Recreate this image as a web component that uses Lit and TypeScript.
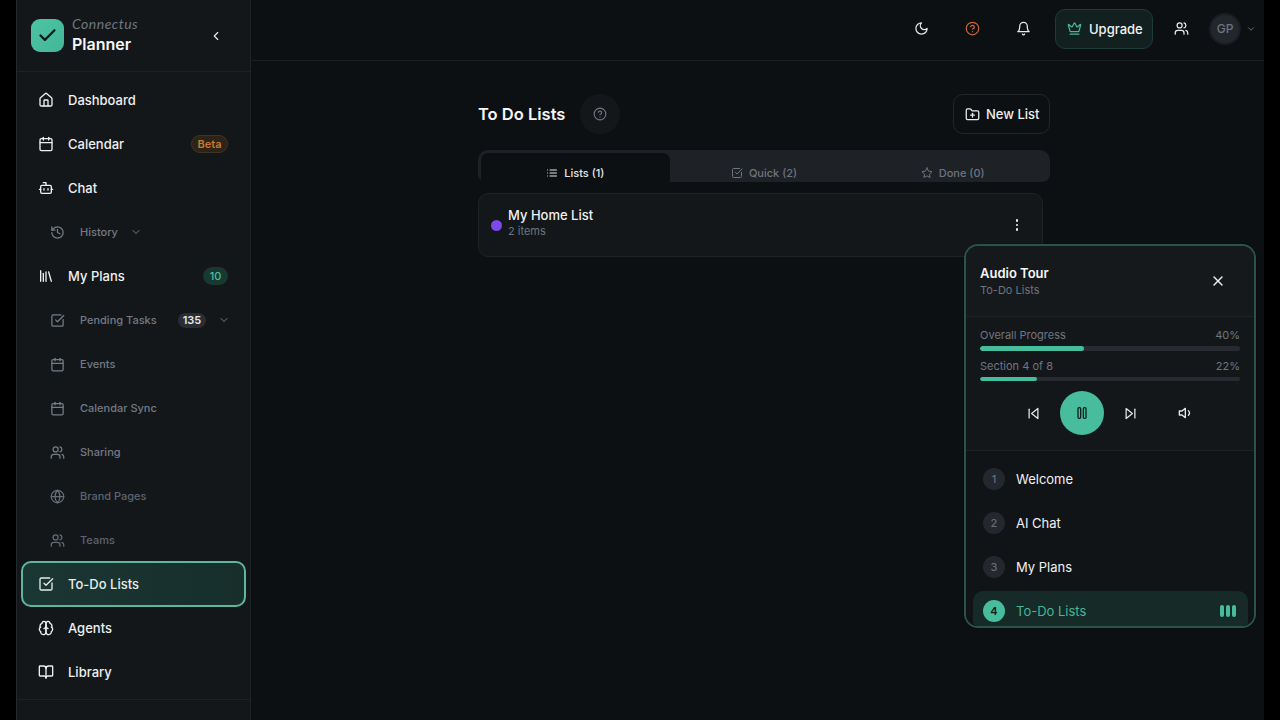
import { LitElement, html, css, svg } from "lit";
import { customElement } from "lit/decorators.js";

const I: Record<string, any> = {
  house: svg`<path d="M15 21v-8a1 1 0 0 0-1-1h-4a1 1 0 0 0-1 1v8"/><path d="M3 10a2 2 0 0 1 .709-1.528l7-5.999a2 2 0 0 1 2.582 0l7 5.999A2 2 0 0 1 21 10v9a2 2 0 0 1-2 2H5a2 2 0 0 1-2-2z"/>`,
  calendar: svg`<path d="M8 2v4"/><path d="M16 2v4"/><rect width="18" height="18" x="3" y="4" rx="2"/><path d="M3 10h18"/>`,
  bot: svg`<path d="M12 8V4H8"/><rect width="16" height="12" x="4" y="8" rx="2"/><path d="M2 14h2"/><path d="M20 14h2"/><path d="M15 13v2"/><path d="M9 13v2"/>`,
  history: svg`<path d="M3 12a9 9 0 1 0 9-9 9.75 9.75 0 0 0-6.74 2.74L3 8"/><path d="M3 3v5h5"/><path d="M12 7v5l4 2"/>`,
  library: svg`<path d="m16 6 4 14"/><path d="M12 6v14"/><path d="M8 8v12"/><path d="M4 4v16"/>`,
  check: svg`<path d="M21 10.5V19a2 2 0 0 1-2 2H5a2 2 0 0 1-2-2V5a2 2 0 0 1 2-2h12.5"/><path d="m9 11 3 3L22 4"/>`,
  users: svg`<path d="M16 21v-2a4 4 0 0 0-4-4H6a4 4 0 0 0-4 4v2"/><circle cx="9" cy="7" r="4"/><path d="M22 21v-2a4 4 0 0 0-3-3.87"/><path d="M16 3.13a4 4 0 0 1 0 7.75"/>`,
  globe: svg`<circle cx="12" cy="12" r="10"/><path d="M12 2a14.5 14.5 0 0 0 0 20 14.5 14.5 0 0 0 0-20"/><path d="M2 12h20"/>`,
  brain: svg`<path d="M12 5a3 3 0 1 0-5.997.125 4 4 0 0 0-2.526 5.77 4 4 0 0 0 .556 6.588A4 4 0 1 0 12 18Z"/><path d="M12 5a3 3 0 1 1 5.997.125 4 4 0 0 1 2.526 5.77 4 4 0 0 1-.556 6.588A4 4 0 1 1 12 18Z"/><path d="M15 13a4.5 4.5 0 0 1-3-4 4.5 4.5 0 0 1-3 4"/><path d="M3.477 10.896a4 4 0 0 1 .585-.396"/><path d="M19.938 10.5a4 4 0 0 1 .585.396"/>`,
  book: svg`<path d="M12 7v14"/><path d="M3 18a1 1 0 0 1-1-1V4a1 1 0 0 1 1-1h5a4 4 0 0 1 4 4 4 4 0 0 1 4-4h5a1 1 0 0 1 1 1v13a1 1 0 0 1-1 1h-6a3 3 0 0 0-3 3 3 3 0 0 0-3-3z"/>`,
  moon: svg`<path d="M12 3a6 6 0 0 0 9 9 9 9 0 1 1-9-9Z"/>`,
  help: svg`<circle cx="12" cy="12" r="10"/><path d="M9.09 9a3 3 0 0 1 5.83 1c0 2-3 3-3 3"/><path d="M12 17h.01"/>`,
  bell: svg`<path d="M6 8a6 6 0 0 1 12 0c0 7 3 9 3 9H3s3-2 3-9"/><path d="M10.3 21a1.94 1.94 0 0 0 3.4 0"/>`,
  crown: svg`<path d="M11.562 3.266a.5.5 0 0 1 .876 0L15.39 8.87a1 1 0 0 0 1.516.294L21.183 5.5a.5.5 0 0 1 .798.519l-2.834 10.246a1 1 0 0 1-.956.734H5.81a1 1 0 0 1-.957-.734L2.02 6.02a.5.5 0 0 1 .798-.519l4.276 3.664a1 1 0 0 0 1.516-.294z"/><path d="M5 21h14"/>`,
  folder: svg`<path d="M12 10v6"/><path d="M9 13h6"/><path d="M20 20a2 2 0 0 0 2-2V8a2 2 0 0 0-2-2h-7.9a2 2 0 0 1-1.69-.9L9.6 3.9A2 2 0 0 0 7.93 3H4a2 2 0 0 0-2 2v13a2 2 0 0 0 2 2Z"/>`,
  list: svg`<path d="M3 12h.01"/><path d="M3 18h.01"/><path d="M3 6h.01"/><path d="M8 12h13"/><path d="M8 18h13"/><path d="M8 6h13"/>`,
  star: svg`<polygon points="12 2 15.09 8.26 22 9.27 17 14.14 18.18 21.02 12 17.77 5.82 21.02 7 14.14 2 9.27 8.91 8.26 12 2"/>`,
  back: svg`<polygon points="19 20 9 12 19 4 19 20"/><line x1="5" x2="5" y1="19" y2="5"/>`,
  fwd: svg`<polygon points="5 4 15 12 5 20 5 4"/><line x1="19" x2="19" y1="5" y2="19"/>`,
  pause: svg`<rect x="14" y="4" width="4" height="16" rx="1.5"/><rect x="6" y="4" width="4" height="16" rx="1.5"/>`,
  vol: svg`<polygon points="11 5 6 9 2 9 2 15 6 15 11 19 11 5"/><path d="M15.54 8.46a5 5 0 0 1 0 7.07"/>`,
  x: svg`<path d="M18 6 6 18"/><path d="m6 6 12 12"/>`,
  left: svg`<path d="m15 18-6-6 6-6"/>`,
  down: svg`<path d="m6 9 6 6 6-6"/>`,
  up: svg`<path d="m18 15-6-6-6 6"/>`,
  tick: svg`<path d="M20 6 9 17l-5-5"/>`,
};

function icon(name: string, cls = "") {
  return html`<svg class="ic ${cls}" viewBox="0 0 24 24" fill="none" stroke="currentColor" stroke-width="2" stroke-linecap="round" stroke-linejoin="round">${I[name]}</svg>`;
}

@customElement("app-root")
export class AppRoot extends LitElement {
  static styles = css`
    :host { display: block; height: 720px; background: #000; font-family: Inter, "Noto Sans", sans-serif; color: #f2f3f4; overflow: hidden; }
    * { box-sizing: border-box; }
    .ic { display: block; flex: none; width: 16px; height: 16px; }
    .s12 { width: 12px; height: 12px; }
    .s14 { width: 14px; height: 14px; }
    .s15 { width: 15px; height: 15px; }
    .app { position: relative; margin: 0 16px; width: 1248px; height: 720px; display: flex; background: #0d1012; overflow: hidden; }

    .side { flex: none; width: 235px; height: 720px; background: #141719; border-left: 1px solid #26292c; border-right: 1px solid #1e2225; display: flex; flex-direction: column; overflow: hidden; }
    .brand { flex: none; height: 72px; border-bottom: 1px solid #1e2225; display: flex; align-items: center; padding: 0 27px 0 14px; }
    .logo { flex: none; width: 33px; height: 33px; border-radius: 9px; background: linear-gradient(135deg, #4cc3a4, #43b898); color: #0c1a17; display: flex; align-items: center; justify-content: center; }
    .logo .ic { width: 21px; height: 21px; stroke-width: 2.6; }
    .bt { margin-left: 8px; flex: 1; margin-top: -1px; }
    .conn { font-family: Lato, sans-serif; font-style: italic; font-size: 14px; line-height: 18px; color: #6f7683; letter-spacing: 0.5px; }
    .plan { font-size: 16px; line-height: 22px; font-weight: 600; color: #f5f6f7; }
    .collapse { color: #e8e9ea; width: 14px; height: 14px; }
    nav { flex: none; padding: 6px 0 5px; }
    .row { height: 44px; margin: 0 4px; padding: 0 18px 0 17px; display: flex; align-items: center; gap: 14px; font-size: 13px; font-weight: 500; color: #eef0f1; }
    .sub { padding-left: 29px; gap: 15px; font-size: 11px; color: #737a85; }
    .sub .ic { width: 15px; height: 15px; color: #767d88; }
    .faint { color: #5d6470; }
    .faint .ic { color: #666d78; }
    .active { height: 46px; margin: -1px 4px; padding-left: 15px; border: 2px solid #5db79b; border-radius: 10px; background: linear-gradient(90deg, #1b3733, #172e2b); color: #e6ece9; }
    .pill { margin-left: auto; display: flex; align-items: center; justify-content: center; border-radius: 9px; font-size: 11px; font-weight: 600; }
    .beta { width: 37px; height: 18px; background: #2c2319; border: 1px solid #43331f; color: #c87a2e; }
    .ten { width: 25px; height: 18px; background: #17392f; color: #4cbf9f; font-weight: 500; }
    .count { width: 28px; height: 15px; background: #2a2e34; color: #e6e7e9; }
    .pending { padding-right: 16px; }
    .pending .chev { margin-left: -3px; width: 12px; height: 12px; }
    .history { gap: 15px; }
    .history .chev { margin-left: -3px; width: 12px; height: 12px; }
    .foot { flex: none; border-top: 1px solid #1e2225; padding-top: 18px; display: flex; justify-content: center; color: #d8dadc; }

    .main { flex: 1; min-width: 0; display: flex; flex-direction: column; }
    header { flex: none; height: 61px; border-bottom: 1px solid #1a1e21; display: flex; align-items: center; padding: 0 8px 3px 0; justify-content: flex-end; color: #e8e9ea; }
    .hbtn { width: 36px; height: 36px; display: flex; align-items: center; justify-content: center; margin-left: 15px; }
    .orange { color: #c8683a; }
    .upgrade { width: 98px; height: 40px; margin-left: 14px; padding-left: 11px; border: 1px solid #1f3b35; border-radius: 10px; background: #12201f; display: flex; align-items: center; gap: 7px; font-size: 13px; font-weight: 500; color: #f2f3f4; }
    .upgrade .ic { color: #48b898; }
    .users { margin-left: 10px; }
    .avatar { width: 32px; height: 32px; margin-left: 10px; border-radius: 50%; background: #22262d; border: 2px solid #1a1d22; display: flex; align-items: center; justify-content: center; font-size: 12px; font-weight: 500; color: #6d7480; }
    .achev { width: 10px; height: 10px; margin-left: 5px; color: #767c86; }

    .content { width: 572px; margin-left: 227px; padding-top: 33px; }
    .title { display: flex; align-items: center; height: 40px; }
    h1 { margin: 0; font-size: 16.5px; font-weight: 600; color: #f5f6f7; }
    .qbtn { width: 40px; height: 40px; margin-left: 15px; border-radius: 50%; background: #14171a; display: flex; align-items: center; justify-content: center; color: #6f7580; }
    .newbtn { margin-left: auto; width: 97px; height: 40px; border: 1px solid #23272a; border-radius: 10px; display: flex; align-items: center; padding-left: 11px; gap: 6px; font-size: 13px; font-weight: 500; color: #eceeef; }
    .newbtn .ic { width: 15px; height: 15px; }
    .tabs { margin-top: 16px; height: 32px; padding: 3px 3px 0; background: #1e2226; border-radius: 10px 10px 8px 8px; display: grid; grid-template-columns: repeat(3, 1fr); }
    .tab { display: flex; justify-content: center; align-items: flex-start; padding-top: 13px; gap: 6px; font-size: 11px; font-weight: 500; line-height: 14px; color: #6d747e; }
    .tab .ic { width: 12px; height: 12px; margin-top: 1px; }
    .tab.on { background: #0d1012; color: #e6e7e9; border-radius: 7px 7px 0 0; }
    .card { margin-top: 11px; width: 565px; height: 64px; background: #141719; border: 1px solid #1e2327; border-radius: 10px; display: flex; align-items: center; padding: 0 24px 0 12px; }
    .dot { width: 11px; height: 11px; border-radius: 50%; background: #7c4ae8; flex: none; }
    .ct { margin-left: 6px; flex: 1; margin-top: -6px; }
    .ctitle { font-size: 13px; font-weight: 500; line-height: 17px; color: #eef0f1; }
    .csub { font-size: 11px; line-height: 14px; color: #6d747e; margin-top: 0; }
    .kebab { display: flex; flex-direction: column; gap: 2px; align-items: center; }
    .kebab i { display: block; width: 2.5px; height: 2.5px; border-radius: 50%; background: #f0f0f0; }

    .tour { position: absolute; left: 948px; top: 244px; width: 292px; height: 384px; background: #141719; border: 2px solid #2b5347; border-radius: 14px; overflow: hidden; display: flex; flex-direction: column; box-shadow: 0 0 0 1px rgba(0,0,0,.2); }
    .thead { flex: none; height: 71px; background: #16191c; border-bottom: 1px solid #1e2225; display: flex; align-items: center; justify-content: space-between; padding: 0 28px 0 14px; }
    .tt { font-size: 13px; line-height: 16px; font-weight: 600; color: #f5f6f7; }
    .ts { font-size: 11px; line-height: 14px; margin-top: 2px; color: #6d747e; }
    .close { color: #f0f0f0; width: 16px; height: 16px; margin-top: 0; }
    .prog { flex: none; padding: 11px 14px 15px; border-bottom: 1px solid #1e2225; background: #141719; }
    .lbl { display: flex; justify-content: space-between; font-size: 11px; line-height: 14px; color: #6f7680; }
    .bar { margin-top: 4px; background: #272b31; border-radius: 3px; overflow: hidden; }
    .bar.a { height: 5px; margin-bottom: 8px; }
    .bar.b { height: 4px; }
    .fill { height: 100%; background: #46bd9d; border-radius: 3px; }
    .ctrls { margin-top: 10px; display: flex; align-items: center; justify-content: center; gap: 19px; color: #e6e7e9; }
    .play { width: 44px; height: 44px; border-radius: 50%; background: #47bd9e; color: #12201c; display: flex; align-items: center; justify-content: center; }
    .vol { margin-left: 21px; }
    .tlist { flex: 1; background: #111417; padding: 8px 6px 0 7px; }
    .ti { height: 40px; margin-bottom: 4px; padding: 0 12px 0 10px; display: flex; align-items: center; gap: 11px; font-size: 13px; color: #f0f1f2; border-radius: 10px; }
    .num { flex: none; width: 22px; height: 22px; border-radius: 50%; background: #24272e; color: #666d78; display: flex; align-items: center; justify-content: center; font-size: 11px; font-weight: 500; }
    .ti.cur { background: #162a28; color: #46b698; }
    .ti.cur .num { background: #47bd9e; color: #10201c; font-weight: 600; }
    .eq { margin-left: auto; display: flex; gap: 2px; }
    .eq i { display: block; width: 4px; height: 12px; border-radius: 2px; background: #46bd9d; }
  `;

  private navRow(ic: string, label: string, cls = "", extra: any = "") {
    return html`<div class="row ${cls}">${icon(ic)}<span>${label}</span>${extra}</div>`;
  }

  render() {
    return html`<div class="app">
      <aside class="side">
        <div class="brand">
          <div class="logo">${icon("tick")}</div>
          <div class="bt"><div class="conn">Connectus</div><div class="plan">Planner</div></div>
          ${icon("left", "collapse")}
        </div>
        <nav>
          ${this.navRow("house", "Dashboard")}
          ${this.navRow("calendar", "Calendar", "", html`<span class="pill beta">Beta</span>`)}
          ${this.navRow("bot", "Chat")}
          ${this.navRow("history", "History", "sub history", icon("down", "chev"))}
          ${this.navRow("library", "My Plans", "", html`<span class="pill ten">10</span>`)}
          ${this.navRow("check", "Pending Tasks", "sub pending", html`<span class="pill count">135</span>${icon("down", "chev")}`)}
          ${this.navRow("calendar", "Events", "sub")}
          ${this.navRow("calendar", "Calendar Sync", "sub")}
          ${this.navRow("users", "Sharing", "sub")}
          ${this.navRow("globe", "Brand Pages", "sub faint")}
          ${this.navRow("users", "Teams", "sub faint")}
          ${this.navRow("check", "To-Do Lists", "active")}
          ${this.navRow("brain", "Agents")}
          ${this.navRow("book", "Library")}
        </nav>
        <div class="foot">${icon("up", "s14")}</div>
      </aside>
      <div class="main">
        <header>
          <div class="hbtn">${icon("moon", "s15")}</div>
          <div class="hbtn orange">${icon("help", "s15")}</div>
          <div class="hbtn">${icon("bell", "s15")}</div>
          <div class="upgrade">${icon("crown", "s15")}<span>Upgrade</span></div>
          <div class="hbtn users">${icon("users", "s15")}</div>
          <div class="avatar">GP</div>
          ${icon("down", "achev")}
        </header>
        <div class="content">
          <div class="title">
            <h1>To Do Lists</h1>
            <div class="qbtn">${icon("help", "s14")}</div>
            <div class="newbtn">${icon("folder")}<span>New List</span></div>
          </div>
          <div class="tabs">
            <div class="tab on">${icon("list")}<span>Lists (1)</span></div>
            <div class="tab">${icon("check")}<span>Quick (2)</span></div>
            <div class="tab">${icon("star")}<span>Done (0)</span></div>
          </div>
          <div class="card">
            <span class="dot"></span>
            <div class="ct"><div class="ctitle">My Home List</div><div class="csub">2 items</div></div>
            <div class="kebab"><i></i><i></i><i></i></div>
          </div>
        </div>
      </div>
      <section class="tour">
        <div class="thead">
          <div><div class="tt">Audio Tour</div><div class="ts">To-Do Lists</div></div>
          ${icon("x", "close")}
        </div>
        <div class="prog">
          <div class="lbl"><span>Overall Progress</span><span>40%</span></div>
          <div class="bar a"><div class="fill" style="width:40%"></div></div>
          <div class="lbl"><span>Section 4 of 8</span><span>22%</span></div>
          <div class="bar b"><div class="fill" style="width:22%"></div></div>
          <div class="ctrls">
            ${icon("back", "s15")}
            <div class="play">${icon("pause", "")}</div>
            ${icon("fwd", "s15")}
            ${icon("vol", "vol")}
          </div>
        </div>
        <div class="tlist">
          ${["Welcome", "AI Chat", "My Plans"].map((t, i) => html`<div class="ti"><span class="num">${i + 1}</span><span>${t}</span></div>`)}
          <div class="ti cur"><span class="num">4</span><span>To-Do Lists</span><span class="eq"><i></i><i></i><i></i></span></div>
        </div>
      </section>
    </div>`;
  }
}
